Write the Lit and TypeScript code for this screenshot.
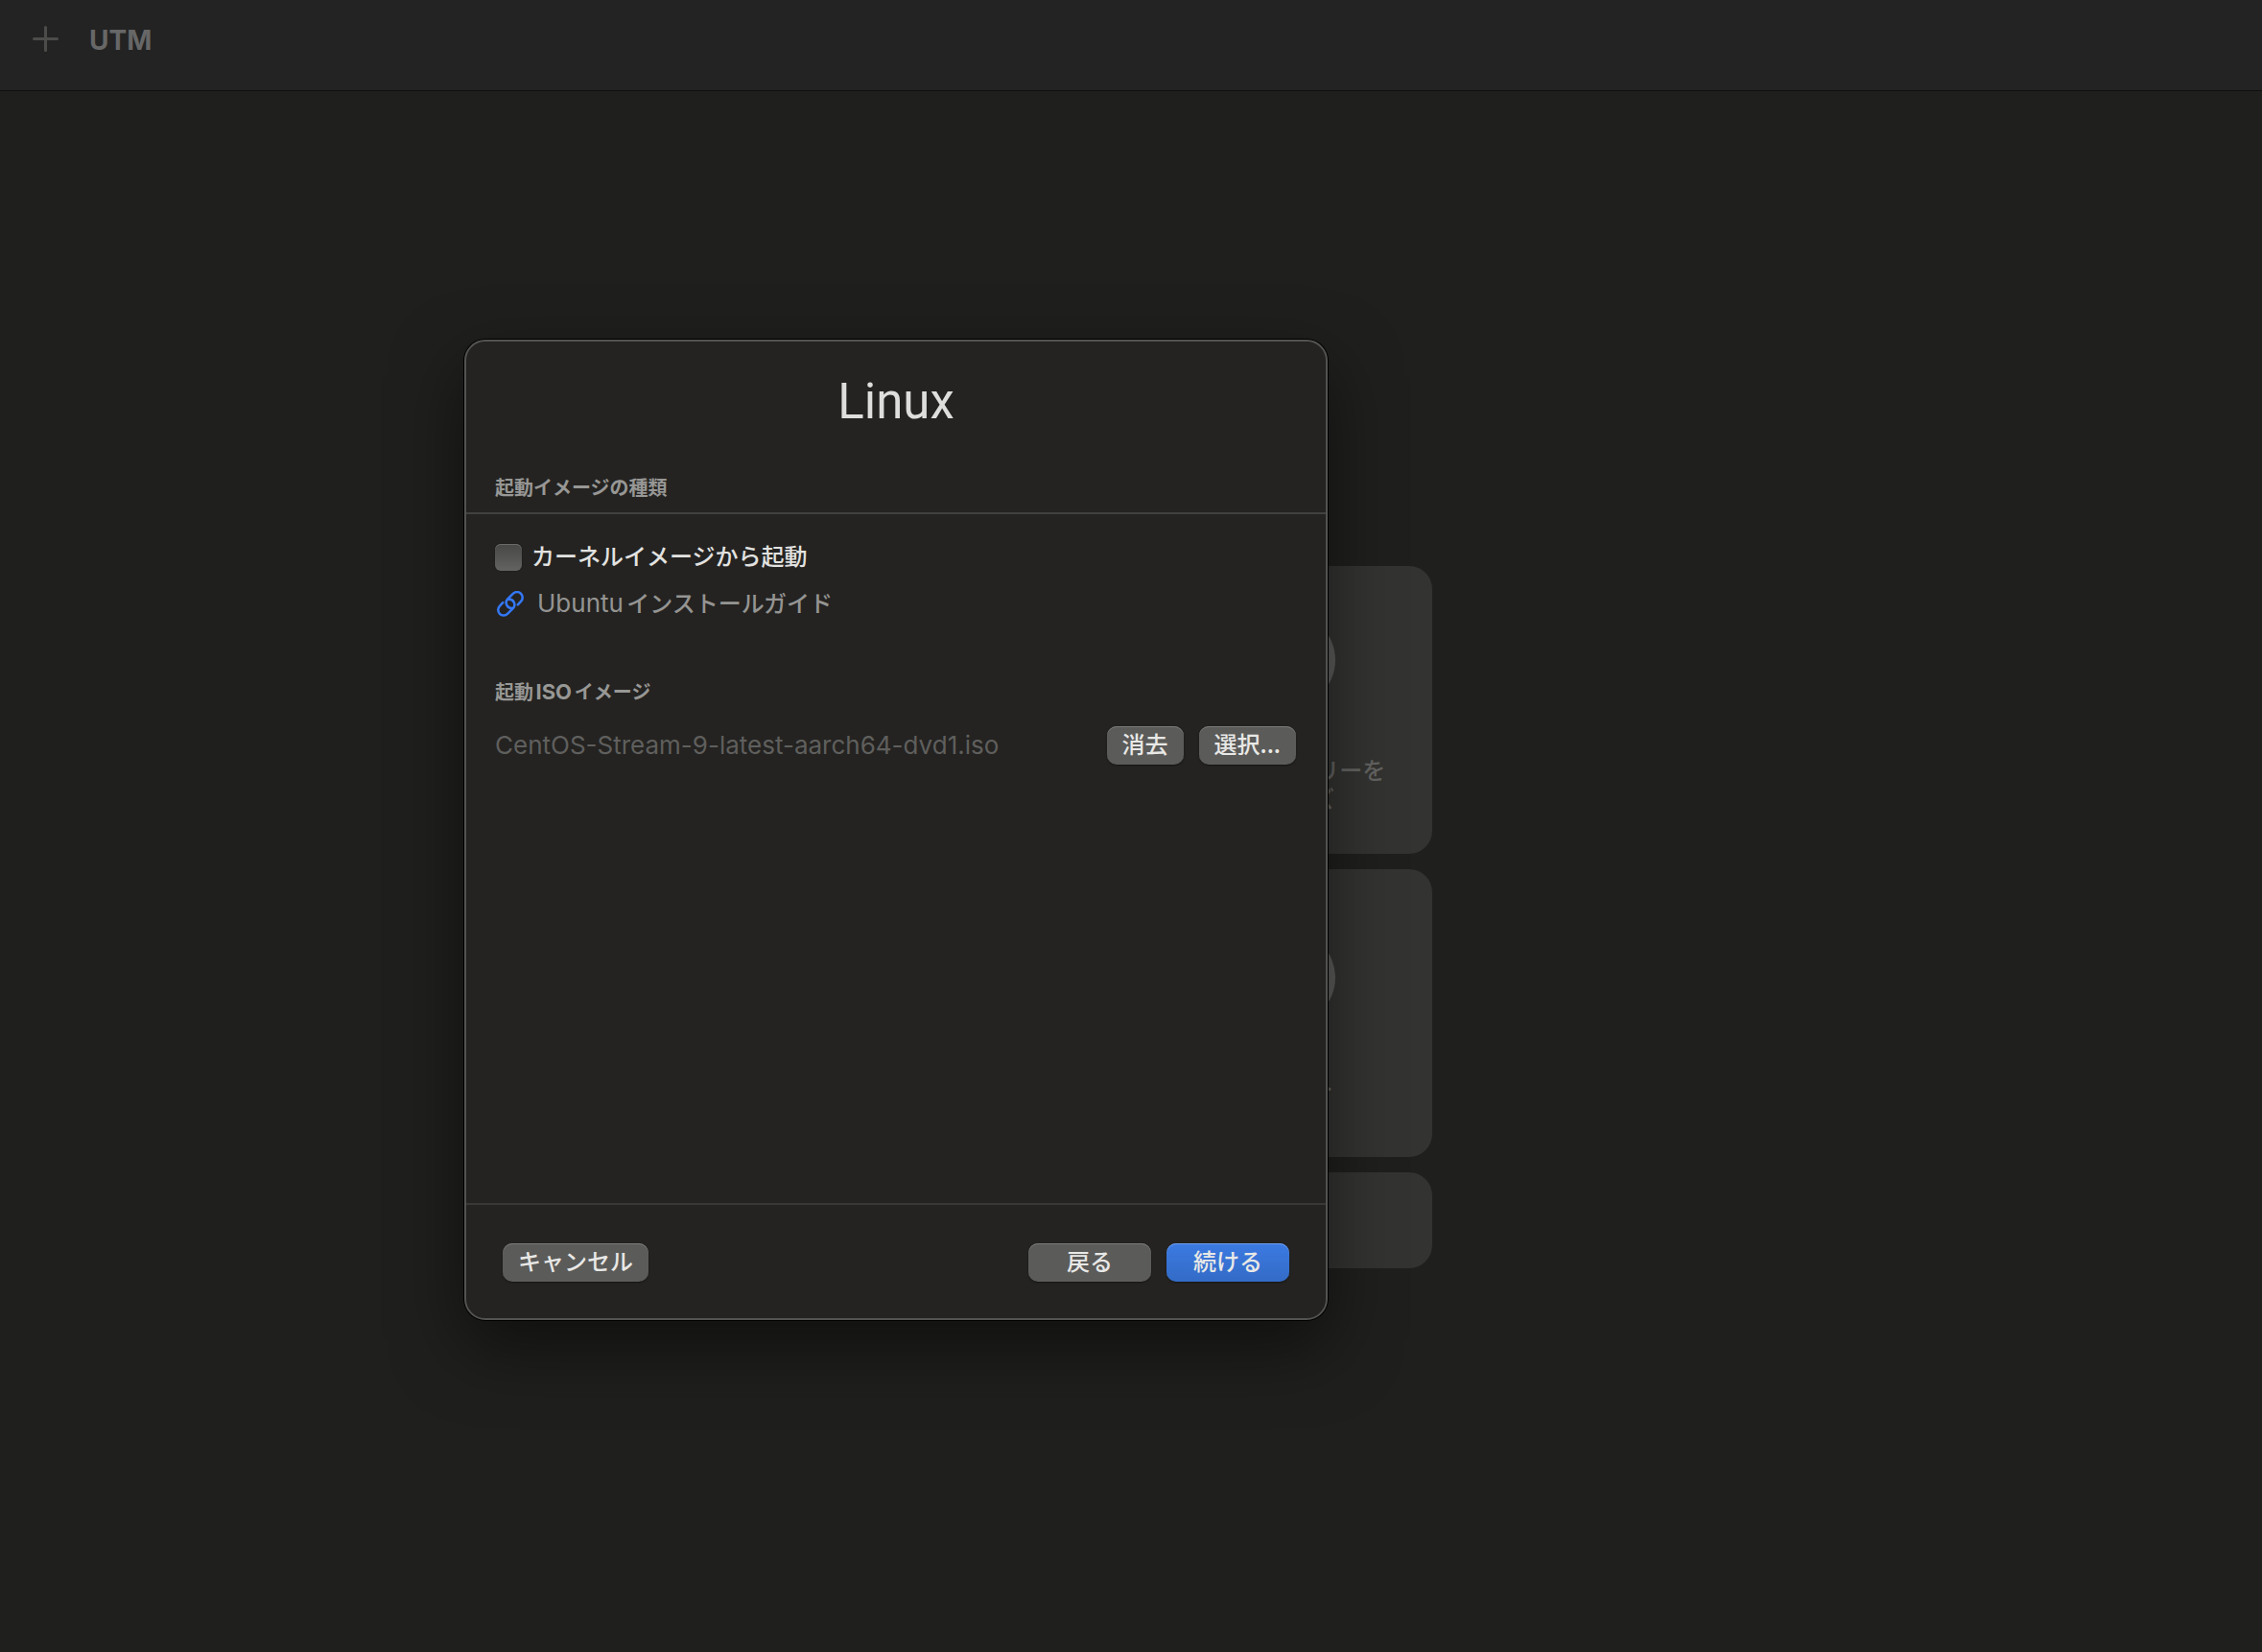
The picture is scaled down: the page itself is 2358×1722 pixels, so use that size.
import { LitElement, html, css, svg } from "lit";
import { customElement, property, state } from "lit/decorators.js";

interface Shortcut {
  latin: string;
  lines: string[];
}

const SHORTCUTS: Shortcut[] = [
  { latin: "UTM", lines: ["ギャラリーを", "ブラウズ"] },
  { latin: "", lines: ["サポート"] },
];

const linkIcon = svg`
  <g fill="none" stroke="currentColor" stroke-width="2.5" stroke-linecap="round">
    <path d="M21.8 14.4 L25 10.9 A5.7 5.7 0 0 0 17 2.7 L11.2 8.4 A5.7 5.7 0 0 0 16.2 17.9"/>
    <path d="M6.2 12.2 L3 15.7 A5.7 5.7 0 0 0 11 23.9 L16.8 18.2 A5.7 5.7 0 0 0 11.8 8.7"/>
  </g>
`;

@customElement("welcome-cards")
export class WelcomeCards extends LitElement {
  static styles = css`
    :host {
      display: block;
    }
    .grid {
      display: grid;
      grid-template-columns: 300px 300px;
      gap: 16px;
    }
    .card {
      grid-column: 2;
      box-sizing: border-box;
      height: 300px;
      border: 0;
      border-radius: 24px;
      padding: 8px 0 0;
      background: #333331;
      color: #636361;
      font: 500 24px/30px Inter, "Noto Sans CJK JP", sans-serif;
      display: grid;
      grid-template-rows: auto auto;
      align-content: center;
      justify-items: center;
      gap: 52px;
    }
    .disc {
      width: 98px;
      height: 98px;
      border-radius: 50%;
      background: #5c5c5a;
    }
    .label {
      text-align: center;
      text-autospace: normal;
    }
    .line {
      display: block;
    }
    .wide {
      grid-column: 1 / 3;
      height: 100px;
      border-radius: 24px;
      background: #333331;
    }
  `;

  render() {
    return html`
      <div class="grid">
        ${SHORTCUTS.map(
          (s) => html`
            <button class="card" type="button">
              <span class="disc"></span>
              <span class="label"
                >${s.lines.map(
                  (l, i) => html`<span class="line">${i === 0 ? s.latin : ""}${l}</span>`,
                )}</span
              >
            </button>
          `,
        )}
        <div class="wide"></div>
      </div>
    `;
  }
}

@customElement("push-button")
export class PushButton extends LitElement {
  @property() label = "";
  @property({ type: Boolean }) primary = false;
  @property({ type: Boolean }) wide = false;

  static styles = css`
    :host {
      display: block;
    }
    .button {
      box-sizing: border-box;
      display: block;
      height: 40px;
      padding: 0 16px 4px;
      border: 0;
      border-radius: 10px;
      background: #5b5b59;
      color: #e8e8e6;
      font: 500 24px/36px "Noto Sans CJK JP", sans-serif;
      white-space: nowrap;
      box-shadow: inset 0 1px 0 #7c7c7a, 0 1px 2px rgba(0, 0, 0, 0.4);
    }
    .wide {
      min-width: 128px;
    }
    .primary {
      background: linear-gradient(#3c7ae2, #336bc6);
      box-shadow: inset 0 1px 0 #6f9ff0, 0 1px 2px rgba(0, 0, 0, 0.4);
    }
  `;

  render() {
    return html`<button
      type="button"
      class="button ${this.primary ? "primary" : ""} ${this.wide ? "wide" : ""}"
    >${this.label}</button>`;
  }
}

@customElement("linux-sheet")
export class LinuxSheet extends LitElement {
  @state() private bootKernel = false;

  static styles = css`
    :host {
      display: block;
    }
    .sheet {
      box-sizing: border-box;
      min-height: 1022px;
      display: flex;
      flex-direction: column;
      border: 2px solid #535351;
      border-radius: 22px;
      background: #242321;
      box-shadow: 0 0 0 1px #000, 0 28px 72px rgba(0, 0, 0, 0.5);
      color: #e2e2e0;
      font: 500 24px/32px Inter, "Noto Sans CJK JP", sans-serif;
      text-autospace: normal;
    }
    .title {
      margin: 0;
      padding: 33px 0 48px;
      text-align: center;
      font-family: Roboto, sans-serif;
      font-size: 51px;
      line-height: 60px;
      font-weight: 400;
      color: #dededc;
    }
    .heading {
      margin: 0;
      padding: 0 30px;
      font-size: 20px;
      line-height: 24px;
      font-weight: 700;
      color: #979795;
    }
    .heading .latin {
      font-size: 22px;
    }
    .heading.ruled {
      padding-bottom: 13px;
      border-bottom: 2px solid #41413f;
    }
    .options {
      display: flex;
      flex-direction: column;
      align-items: flex-start;
      gap: 16px;
      padding: 29px 30px 63px;
    }
    .check {
      display: flex;
      align-items: center;
      gap: 10px;
    }
    .box {
      appearance: none;
      width: 28px;
      height: 28px;
      margin: 0;
      border-radius: 6px;
      background: linear-gradient(#474745, #636361);
      box-shadow: inset 0 1px 0 #6a6a68, 0 0 1px #000;
    }
    .box:checked {
      background: #3c7ae2;
    }
    .guide {
      display: flex;
      align-items: center;
      gap: 14px;
      padding-left: 2px;
      color: #949492;
      text-decoration: none;
    }
    .guide .latin {
      font-size: 26px;
      font-weight: 400;
    }
    .link-icon {
      width: 28px;
      height: 28px;
      color: #3478f6;
    }
    .file {
      display: flex;
      align-items: center;
      gap: 16px;
      padding: 23px 31px 0 30px;
    }
    .name {
      flex: 1;
      color: #5f5f5d;
      font-size: 26px;
      font-weight: 400;
    }
    .footer {
      display: flex;
      align-items: center;
      gap: 16px;
      margin-top: auto;
      padding: 40px 38px 38px;
      border-top: 2px solid #393836;
    }
    .spacer {
      flex: 1;
    }
  `;

  private toggle(e: Event) {
    this.bootKernel = (e.target as HTMLInputElement).checked;
  }

  render() {
    return html`
      <section class="sheet" role="dialog" aria-labelledby="title">
        <h1 class="title" id="title">Linux</h1>
        <h2 class="heading ruled">起動イメージの種類</h2>
        <div class="options">
          <label class="check">
            <input class="box" type="checkbox" .checked=${this.bootKernel} @change=${this.toggle} />
            <span>カーネルイメージから起動</span>
          </label>
          <a class="guide" href="#guide">
            <svg class="link-icon" viewBox="0 0 28 28" aria-hidden="true">${linkIcon}</svg>
            <span><span class="latin">Ubuntu</span>インストールガイド</span>
          </a>
        </div>
        <h2 class="heading">起動<span class="latin">ISO</span>イメージ</h2>
        <div class="file">
          <span class="name">CentOS-Stream-9-latest-aarch64-dvd1.iso</span>
          <push-button label="消去"></push-button>
          <push-button label="選択..."></push-button>
        </div>
        <footer class="footer">
          <push-button label="キャンセル"></push-button>
          <span class="spacer"></span>
          <push-button wide label="戻る"></push-button>
          <push-button wide primary label="続ける"></push-button>
        </footer>
      </section>
    `;
  }
}

@customElement("app-root")
export class AppRoot extends LitElement {
  static styles = css`
    :host {
      display: block;
    }
    .window {
      position: relative;
      min-height: 100vh;
      display: flex;
      flex-direction: column;
      background: #1f1f1d;
      font-family: Inter, "Noto Sans CJK JP", sans-serif;
    }
    .toolbar {
      display: flex;
      align-items: flex-start;
      gap: 31px;
      box-sizing: border-box;
      height: 95px;
      padding: 26px 33px 0;
      background: #232323;
      border-bottom: 1px solid #0f0f0e;
    }
    .add {
      display: flex;
      padding: 0;
      border: 0;
      background: none;
      color: #4c4c4a;
    }
    .plus {
      width: 29px;
      height: 29px;
    }
    .app-name {
      font-size: 28px;
      line-height: 32px;
      font-weight: 700;
      color: #676767;
    }
    .main {
      flex: 1;
      display: flex;
      justify-content: center;
      align-items: center;
      padding: 95px 0 0 12px;
    }
    .sheet {
      position: absolute;
      top: 354px;
      left: calc(50% - 695px);
      width: 900px;
    }
  `;

  render() {
    return html`
      <div class="window">
        <header class="toolbar">
          <button class="add" type="button" aria-label="新規">
            <svg class="plus" viewBox="0 0 29 29" aria-hidden="true">
              <path d="M14.5 2.5V26.5M2.5 14.5H26.5" stroke="currentColor" stroke-width="3" stroke-linecap="round" />
            </svg>
          </button>
          <span class="app-name">UTM</span>
        </header>
        <main class="main">
          <welcome-cards></welcome-cards>
        </main>
        <linux-sheet class="sheet"></linux-sheet>
      </div>
    `;
  }
}
